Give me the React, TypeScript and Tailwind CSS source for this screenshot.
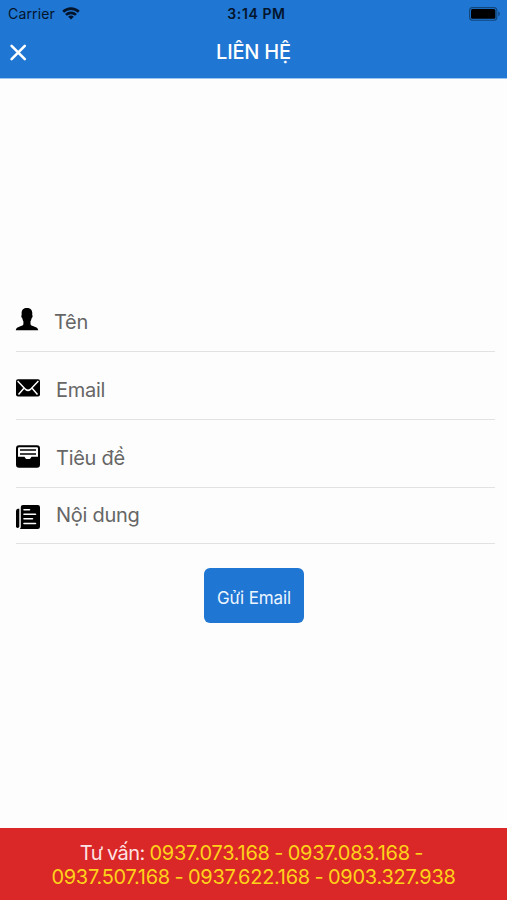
import type { ReactNode } from "react";

function WifiIcon() {
  return (
    <svg width="18" height="13" viewBox="0 0 18 13" fill="none" stroke="#04142b" strokeWidth="2.6">
      <path d="M1.2 4.8a11.2 11.2 0 0 1 15.6 0" />
      <path d="M4 7.9a7.2 7.2 0 0 1 10 0" />
      <path d="M9 12.4 6.2 9.8a4.1 4.1 0 0 1 5.6 0Z" fill="#04142b" stroke="none" />
    </svg>
  );
}

function BatteryIcon() {
  return (
    <svg width="32" height="14" viewBox="0 0 32 14" fill="none">
      <rect x="0.6" y="0.6" width="27.2" height="12.6" rx="3" stroke="#124579" strokeWidth="1.1" />
      <rect x="2" y="2" width="24.4" height="9.8" rx="1.6" fill="#000" />
      <path d="M29.3 4.6c2 .6 2 4 0 4.6Z" fill="#124579" />
    </svg>
  );
}

function CloseIcon() {
  return (
    <svg width="18" height="18" viewBox="0 0 18 18" fill="none" stroke="#fff" strokeWidth="2.6" strokeLinecap="round">
      <path d="m2.6 2.9 13.2 13.2M15.8 2.9 2.6 16.1" />
    </svg>
  );
}

function PersonIcon() {
  return (
    <svg width="24" height="24" viewBox="0 0 24 24" className="overflow-visible">
      <path d="M10.9.9c3.3 0 5.4 1.9 5.4 5.2 0 .8-.1 1.3-.1 1.8.7.3.5 2.6-.5 3.2-.4 1.7-.7 2.5-1.2 3.2v3c.4 1.4 2.3 1.8 4.7 2.6 2 .7 2.8 1.5 3 3.4H-.2c.1-1.9 1-2.7 2.9-3.4 2.4-.8 4.3-1.2 4.7-2.6v-3c-.5-.7-.8-1.5-1.2-3.2-1-.6-1.2-2.9-.5-3.2 0-.5-.1-1-.1-1.8C5.6 2.8 7.6.9 10.9.9Z" />
    </svg>
  );
}

function MailIcon() {
  return (
    <svg width="24" height="18" viewBox="0 0 24 18">
      <rect width="24" height="17.4" y="0.2" rx="2" />
      <g fill="none" stroke="#fdfdfd" strokeWidth="1.5">
        <path d="M1.6 1.9 9.6 10.4q2.4 2 4.8 0l8-8.5" />
        <path d="m2.5 15.5 5.4-6.3M21.5 15.5l-5.4-6.3" />
      </g>
    </svg>
  );
}

function ArchiveIcon() {
  return (
    <svg width="24" height="23" viewBox="0 0 24 23">
      <rect width="24" height="22.5" y="0.2" rx="3" />
      <path
        d="M3.3 2.2h17.4q1.3 0 1.3 1.3v8.3h-6.3c-.7 0-.7 2.2-2.2 2.2h-3c-1.5 0-1.5-2.2-2.2-2.2H2V3.5q0-1.3 1.3-1.3Z"
        fill="#fdfdfd"
      />
      <path d="M4 5h16M4 9h16" stroke="#000" strokeWidth="1.6" />
    </svg>
  );
}

function NewsIcon() {
  return (
    <svg width="24" height="24" viewBox="0 0 24 24">
      <path d="M7 0h14.8Q24 0 24 2.2v19.6q0 2.2-2.2 2.2H3.8q1-.9 1-2.3V1.9Q4.8 0 7 0Z" />
      <path d="M3.3 3.8v17.5a1.6 1.6 0 0 1-3.3 0V6q0-1.9 1.9-2.2Z" />
      <path d="M8 4.7h5.5M8 9.2h11.5M8 13.8h8.5M8 18.5h11.5" stroke="#fdfdfd" strokeWidth="1.6" strokeLinecap="round" />
    </svg>
  );
}

type FieldProps = {
  icon: ReactNode;
  label: string;
  className: string;
  labelClassName: string;
};

function Field({ icon, label, className, labelClassName }: FieldProps) {
  return (
    <label className={`flex items-start border-b border-[#e2e2e2] ${className}`}>
      <span className="flex h-6 w-6 shrink-0 items-center">{icon}</span>
      <span className={`text-[20px] leading-6 tracking-[-0.28px] whitespace-nowrap text-[#666] ${labelClassName}`}>
        {label}
      </span>
    </label>
  );
}

export default function App() {
  return (
    <div className="flex h-[900px] w-full flex-col bg-[#fdfdfd] font-['Inter',sans-serif]">
      <header className="h-[79px] shrink-0 border-b border-[#9cc5ef] bg-[#1f76d3] text-[#04142b]">
        <div className="grid h-[27px] grid-cols-3 items-center pr-[6px] pl-2 text-[14px] leading-[27px]">
          <div className="flex items-center gap-[7px]">
            <span className="tracking-[0.15px]">Carrier</span>
            <WifiIcon />
          </div>
          <span className="pl-1 text-center font-semibold tracking-[0.6px]">3:14 PM</span>
          <div className="flex justify-end">
            <BatteryIcon />
          </div>
        </div>
        <div className="grid h-[50px] grid-cols-[1fr_auto_1fr] items-center px-[9px]">
          <button aria-label="Close" className="w-[18px]">
            <CloseIcon />
          </button>
          <h1 className="text-[20px] leading-6 font-[550] tracking-[-0.2px] text-white">LIÊN HỆ</h1>
        </div>
      </header>

      <main className="flex flex-1 flex-col pt-[216px] pr-3 pl-4">
        <Field icon={<PersonIcon />} label="Tên" className="h-[57px] pt-3" labelClassName="ml-[14px] mt-[3px]" />
        <Field icon={<MailIcon />} label="Email" className="h-[68px] pt-6" labelClassName="ml-4 mt-[2px]" />
        <Field icon={<ArchiveIcon />} label="Tiêu đề" className="h-[68px] pt-6" labelClassName="ml-4 mt-[2px]" />
        <Field icon={<NewsIcon />} label="Nội dung" className="h-14 pt-[17px]" labelClassName="ml-4 -mt-[2px]" />
        <button className="mt-6 ml-[188px] h-[55px] w-[100px] rounded-md bg-[#1f76d3] pt-[6px] text-[17px] tracking-[-0.1px] text-[#edf5ff]">
          Gửi Email
        </button>
      </main>

      <footer className="h-[72px] shrink-0 bg-[#da2727] pt-[13px] text-center text-[20px] leading-6 tracking-[-0.27px] [word-spacing:-0.8px] text-[#ffd21a]">
        <p className="pr-[4px]">
          <span className="tracking-[-0.5px] text-[#fde3e3]">Tư vấn:</span> 0937.073.168 - 0937.083.168 -
        </p>
        <p>0937.507.168 - 0937.622.168 - 0903.327.938</p>
      </footer>
    </div>
  );
}
